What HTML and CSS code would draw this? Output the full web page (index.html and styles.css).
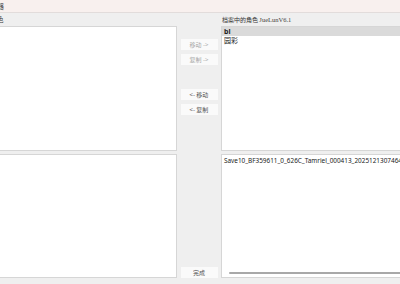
FILE: index.html
```
<!DOCTYPE html>
<html>
<head>
<meta charset="utf-8">
<link rel="stylesheet" href="styles.css">
</head>
<body>
<div class="titlebar"><span class="title">器</span></div>
<div class="main">
  <div class="label left-label">色</div>
  <div class="label right-label">档案中的角色 <span class="latin">JueLunV6.1</span></div>
  <div class="panel lt"></div>
  <div class="middle">
    <button class="btn disabled b1">移动 -&gt;</button>
    <button class="btn disabled">复制 -&gt;</button>
    <button class="btn b3">&lt;- 移动</button>
    <button class="btn">&lt;- 复制</button>
    <button class="btn done">完成</button>
  </div>
  <div class="panel rt">
    <div class="row sel">bl</div>
    <div class="row">园彩</div>
  </div>
  <div class="panel lb"></div>
  <div class="panel rb">
    <div class="save">Save10_BF359611_0_626C_Tamriel_000413_20251213074640</div>
    <div class="hscroll"></div>
  </div>
</div>
</body>
</html>
```
FILE: styles.css
```
html, body {
  margin: 0;
  padding: 0;
  width: 400px;
  height: 284px;
  overflow: hidden;
  background: #efefef;
  font-family: "Noto Sans CJK SC", "Noto Sans", sans-serif;
  color: #333;
}
.titlebar {
  height: 12px;
  background: #f8f0ee;
  border-bottom: 1px solid #e2dcdb;
  font-size: 7px;
  line-height: 12px;
  color: #444;
}
.title {
  display: inline-block;
  margin-left: -3px;
}
.main {
  display: grid;
  grid-template-columns: 178px 44px 180px;
  grid-template-rows: 13px 125px 127px;
  row-gap: 0;
  margin-left: -1px;
}
.label {
  font-size: 6px;
  line-height: 13px;
  color: #333;
}
.left-label {
  grid-column: 1;
  grid-row: 1;
  margin-left: -2px;
  font-size: 6.5px;
}
.right-label {
  grid-column: 3;
  grid-row: 1;
  padding-left: 1px;
}
.latin {
  font-family: "Liberation Serif", serif;
  font-size: 6.5px;
  color: #444;
}
.panel {
  background: #fff;
  border: 1px solid #d6d6d6;
  box-sizing: border-box;
  overflow: hidden;
  position: relative;
}
.lt {
  grid-column: 1;
  grid-row: 2;
}
.lb {
  grid-column: 1;
  grid-row: 3;
  margin-top: 3px;
}
.rt {
  grid-column: 3;
  grid-row: 2;
  width: 190px;
}
.rb {
  grid-column: 3;
  grid-row: 3;
  margin-top: 3px;
  width: 190px;
}
.middle {
  grid-column: 2;
  grid-row: 2 / 4;
  display: flex;
  flex-direction: column;
  align-items: center;
  padding-top: 13px;
}
.btn {
  width: 37px;
  height: 11px;
  padding: 0;
  margin: 0 0 4px 0;
  border: none;
  background: #fafafa;
  font-family: "Noto Sans CJK SC", "Noto Sans", sans-serif;
  font-size: 6px;
  line-height: 11px;
  color: #555;
}
.btn.disabled {
  color: #a8a8a8;
}
.b3 {
  margin-top: 20px;
}
.done {
  margin-top: auto;
  margin-bottom: 0;
}
.row {
  font-size: 7px;
  line-height: 9px;
  padding-left: 2px;
  color: #222;
}
.row.sel {
  background: #dadada;
  font-family: "Noto Sans", sans-serif;
  font-weight: bold;
}
.save {
  font-family: "Noto Sans", sans-serif;
  font-size: 6.4px;
  line-height: 9px;
  padding: 1px 0 0 2px;
  white-space: nowrap;
  color: #222;
}
.hscroll {
  position: absolute;
  left: 7px;
  right: 0;
  bottom: 3px;
  height: 2px;
  background: #a8a8a8;
  border-radius: 1px;
}
```
